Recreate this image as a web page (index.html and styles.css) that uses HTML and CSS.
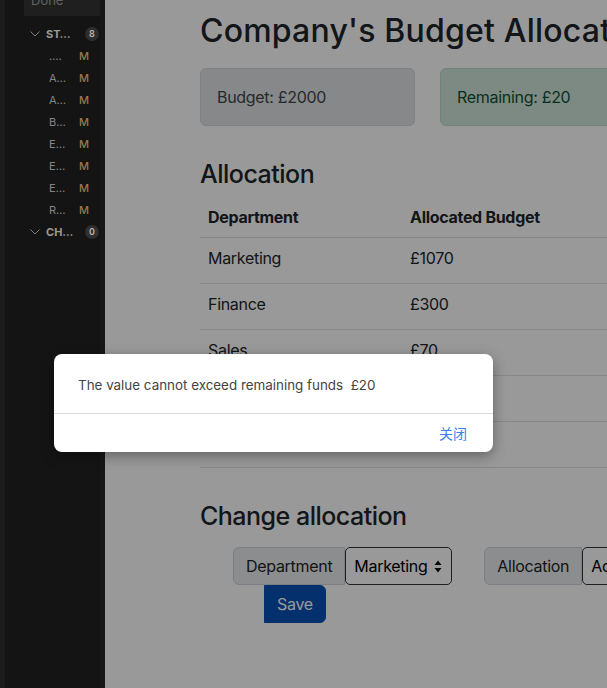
FILE: index.html
```html
<!DOCTYPE html>
<html lang="en">
<head>
<meta charset="utf-8">
<title>Company's Budget Allocation</title>
<link rel="stylesheet" href="styles.css">
</head>
<body>
<div class="app">
  <aside class="scm">
    <div class="done-box"><span>Done</span></div>
    <ul class="scm-tree">
      <li class="scm-row group">
        <svg class="chevron" width="10" height="6" viewBox="0 0 10 6"><path d="M0.5 0.5 L5 5 L9.5 0.5" fill="none" stroke="#7d7d7d" stroke-width="1"/></svg>
        <span class="name">STAGED CHANGES</span>
        <span class="count">8</span>
      </li>
      <li class="scm-row file"><span class="name">.gitignore</span><span class="status">M</span></li>
      <li class="scm-row file"><span class="name">App.js</span><span class="status">M</span></li>
      <li class="scm-row file"><span class="name">AllocationForm.js</span><span class="status">M</span></li>
      <li class="scm-row file"><span class="name">Budget.js</span><span class="status">M</span></li>
      <li class="scm-row file"><span class="name">ExpenseItem.js</span><span class="status">M</span></li>
      <li class="scm-row file"><span class="name">ExpenseList.js</span><span class="status">M</span></li>
      <li class="scm-row file"><span class="name">ExpenseTotal.js</span><span class="status">M</span></li>
      <li class="scm-row file"><span class="name">Remaining.js</span><span class="status">M</span></li>
      <li class="scm-row group">
        <svg class="chevron" width="10" height="6" viewBox="0 0 10 6"><path d="M0.5 0.5 L5 5 L9.5 0.5" fill="none" stroke="#7d7d7d" stroke-width="1"/></svg>
        <span class="name">CHANGES</span>
        <span class="count">0</span>
      </li>
    </ul>
  </aside>

  <main class="preview">
    <div class="container">
      <h1 class="page-title">Company's Budget Allocation</h1>
      <div class="summary">
        <div class="alert alert-secondary">Budget: £2000</div>
        <div class="alert alert-success">Remaining: £20</div>
        <div class="alert alert-primary">Spent so far: £1980</div>
      </div>

      <h3 class="section-title">Allocation</h3>
      <table class="table">
        <thead>
          <tr><th class="col-dept">Department</th><th>Allocated Budget</th><th>Increase by 10</th><th>Decrease by 10</th></tr>
        </thead>
        <tbody>
          <tr><td>Marketing</td><td>£1070</td><td></td><td></td></tr>
          <tr><td>Finance</td><td>£300</td><td></td><td></td></tr>
          <tr><td>Sales</td><td>£70</td><td></td><td></td></tr>
          <tr><td>Human Resource</td><td>£40</td><td></td><td></td></tr>
          <tr><td>IT</td><td>£500</td><td></td><td></td></tr>
        </tbody>
      </table>

      <h3 class="section-title change-title">Change allocation</h3>
      <div class="input-group">
        <label class="input-group-text">Department</label>
        <span class="native-select sel-dept">
          <span class="sel-value">Marketing</span>
          <svg class="updown" width="8" height="13" viewBox="0 0 8 13"><path d="M4 0.5 L7.5 5 L0.5 5 Z M4 12.5 L7.5 8 L0.5 8 Z" fill="#111"/></svg>
        </span>
        <label class="input-group-text gap-left">Allocation</label>
        <span class="native-select sel-type">
          <span class="sel-value">Add</span>
          <svg class="updown" width="8" height="13" viewBox="0 0 8 13"><path d="M4 0.5 L7.5 5 L0.5 5 Z M4 12.5 L7.5 8 L0.5 8 Z" fill="#111"/></svg>
        </span>
        <span class="input-group-text currency">£</span>
        <span class="form-control"></span>
        <button class="btn-save">Save</button>
      </div>
    </div>
    <div class="backdrop"></div>
  </main>

  <div class="dialog">
    <div class="dialog-body">The value cannot exceed remaining funds&nbsp; £20</div>
    <div class="dialog-footer"><button class="dialog-btn">关闭</button></div>
  </div>
</div>
</body>
</html>
```

FILE: styles.css
```css
* { box-sizing: border-box; }

html, body {
  margin: 0;
  padding: 0;
  width: 607px;
  height: 688px;
  overflow: hidden;
  font-family: Inter, "Noto Sans", "Noto Sans CJK SC", sans-serif;
}

.app {
  position: relative;
  display: flex;
  width: 607px;
  height: 688px;
}

/* ---------- source control sidebar ---------- */
.scm {
  flex: none;
  width: 105px;
  height: 688px;
  background: #141414;
  border-left: 5px solid #1b1b1b;
  border-right: 5px solid #171717;
  font-size: 11px;
  line-height: 22px;
}

.done-box {
  margin: -12px 0 0 19px;
  width: 76px;
  height: 28px;
  background: #1f1f1f;
  color: #616161;
  font-size: 13px;
  line-height: 16px;
  padding: 4px 0 0 7px;
}

.scm-tree {
  list-style: none;
  margin: 7px 0 0;
  padding: 0;
}

.scm-row {
  display: flex;
  align-items: center;
  height: 22px;
}

.scm-row .name {
  overflow: hidden;
  white-space: nowrap;
  text-overflow: ellipsis;
}

.group {
  padding: 0 1px 0 25px;
}

.group .chevron {
  flex: none;
  margin-right: 6px;
}

.group .name {
  width: 28px;
  font-weight: 700;
  color: #9a9a9a;
}

.group .count {
  margin-left: auto;
  width: 14px;
  height: 14px;
  border-radius: 50%;
  background: #2e2e2e;
  color: #b5b5b5;
  font-size: 9px;
  font-weight: 600;
  line-height: 14px;
  text-align: center;
}

.file {
  padding: 0 12px 0 44px;
}

.file .name {
  width: 18px;
  color: #858585;
}

.file .status {
  margin-left: auto;
  width: 9px;
  color: #98794e;
  font-weight: 500;
}

/* ---------- preview page ---------- */
.preview {
  position: relative;
  flex: 1 1 auto;
  min-width: 0;
  height: 688px;
  overflow: hidden;
  background: #fff;
  color: #212529;
  font-size: 16px;
  line-height: 24px;
  letter-spacing: -0.3px;
}

.container {
  width: 900px;
  padding-left: 95px;
}

.page-title {
  margin: 12px 0 18px;
  font-size: 32px;
  line-height: 38px;
  font-weight: 500;
  white-space: nowrap;
  letter-spacing: 0.2px;
}

.summary {
  display: flex;
  gap: 25px;
  margin-bottom: 33px;
}

.alert {
  flex: none;
  width: 215px;
  padding: 16px;
  border: 1px solid transparent;
  border-radius: 6px;
}

.alert-secondary { background: #e2e3e5; border-color: #d3d6d8; color: #41464b; }
.alert-success   { background: #d1e7dd; border-color: #badbcc; color: #0f5132; }
.alert-primary   { background: #cfe2ff; border-color: #b6d4fe; color: #084298; }

.section-title {
  margin: 0 0 8px;
  font-size: 25px;
  line-height: 30px;
  font-weight: 500;
  letter-spacing: -0.5px;
}

.table {
  width: 805px;
  border-collapse: collapse;
  margin-bottom: 33px;
}

.table th,
.table td {
  text-align: left;
  vertical-align: top;
  border-bottom: 1px solid #dee2e6;
  padding: 8px;
}

.table th {
  font-weight: 700;
}

.table td {
  padding-bottom: 13px;
}

.table .col-dept {
  width: 202px;
}

.change-title {
  margin-bottom: 16px;
}

.input-group {
  display: flex;
  flex-wrap: wrap;
  width: 640px;
  margin-left: 33px;
}

.input-group > * {
  flex: none;
}

.input-group-text {
  display: block;
  height: 38px;
  padding: 6px 12px;
  background: #e9ecef;
  border: 1px solid #ced4da;
  border-radius: 6px 0 0 6px;
  color: #212529;
}

.gap-left {
  margin-left: 32px;
}

.currency {
  border-radius: 0;
}

.native-select {
  position: relative;
  display: block;
  height: 38px;
  padding: 6px 0 0 8px;
  background: #fff;
  border: 1px solid #333;
  border-radius: 5px;
  color: #000;
}

.sel-dept { width: 107px; }
.sel-type { width: 80px; }

.updown {
  position: absolute;
  right: 9px;
  top: 12px;
}

.form-control {
  display: block;
  width: 150px;
  height: 38px;
  border: 1px solid #ced4da;
  background: #fff;
}

.btn-save {
  display: block;
  height: 38px;
  margin-left: 31px;
  padding: 6px 12px;
  border: 1px solid #0950b8;
  border-radius: 0 6px 6px 0;
  background: #0950b8;
  color: #fff;
  font-family: inherit;
  font-size: 16px;
  line-height: 24px;
  letter-spacing: -0.3px;
}

.backdrop {
  position: absolute;
  inset: 0;
  background: rgba(0, 0, 0, 0.4);
}

/* ---------- alert dialog ---------- */
.dialog {
  position: absolute;
  left: 54px;
  top: 354px;
  width: 439px;
  height: 98px;
  background: #fff;
  border-radius: 8px;
  box-shadow: 0 4px 14px rgba(0, 0, 0, 0.35);
  z-index: 10;
}

.dialog-body {
  height: 60px;
  padding: 21px 24px 0;
  font-size: 13.4px;
  line-height: 20px;
  color: #444;
  border-bottom: 1px solid #d9d9d9;
}

.dialog-footer {
  display: flex;
  justify-content: flex-end;
  height: 38px;
  padding-right: 26px;
}

.dialog-btn {
  padding: 0;
  border: 0;
  background: none;
  color: #3b7ff4;
  font-family: "Noto Sans CJK SC", sans-serif;
  font-size: 14px;
  line-height: 38px;
}
```
